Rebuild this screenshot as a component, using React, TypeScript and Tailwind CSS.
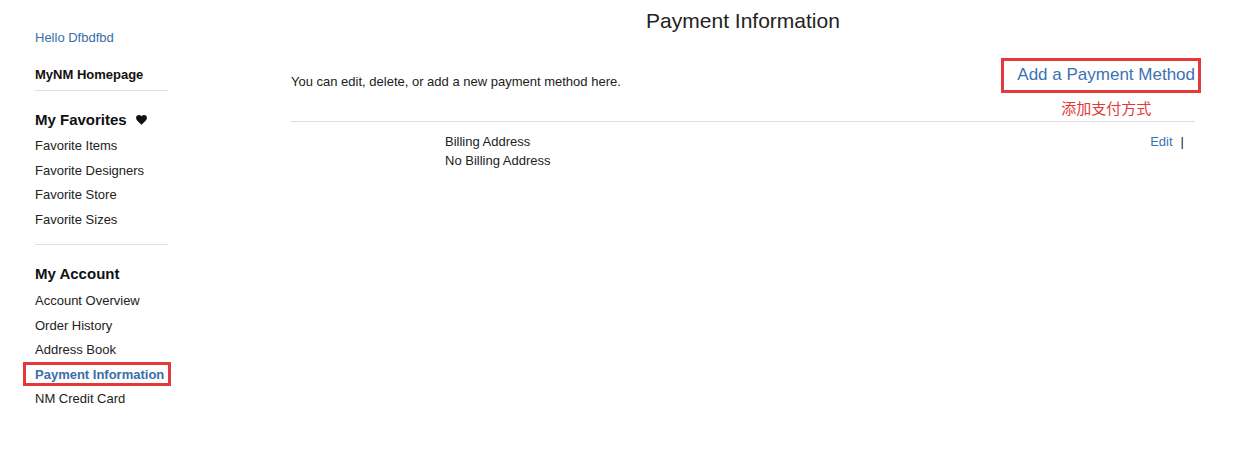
const FAVORITES = ['Favorite Items', 'Favorite Designers', 'Favorite Store', 'Favorite Sizes']
const ACCOUNT = ['Account Overview', 'Order History', 'Address Book', 'Payment Information', 'NM Credit Card']

function Heart() {
  return (
    <svg width="11" height="10" viewBox="0 0 24 22" aria-hidden="true" className="ml-[9px] inline-block">
      <path d="M12 21.5 10.3 20C4.2 14.5 0 10.7 0 6.2 0 2.6 2.8 0 6.4 0c2 0 4 .9 5.6 2.5C13.6.9 15.6 0 17.6 0 21.2 0 24 2.6 24 6.2c0 4.5-4.2 8.3-10.3 13.8L12 21.5z" fill="#111" />
    </svg>
  )
}

function Sidebar() {
  return (
    <aside className="w-[133px] shrink-0 pt-[30px] text-[13px] text-[#222]">
      <p className="leading-[16px] text-[#3a6ea8]">Hello Dfbdfbd</p>
      <p className="mt-[21px] border-b border-[#dedede] pb-[7px] font-bold leading-[16px] text-[#111]">MyNM Homepage</p>

      <h3 className="mt-[20px] flex items-center text-[15px] font-bold leading-[18px] text-[#111]">
        My Favorites
        <Heart />
      </h3>
      <ul className="mt-[5px] border-b border-[#dedede] pb-[12px]">
        {FAVORITES.map((item) => (
          <li key={item} className="leading-[24.5px]">{item}</li>
        ))}
      </ul>

      <h3 className="mt-[20px] text-[15px] font-bold leading-[18px] text-[#111]">My Account</h3>
      <ul className="mt-[6px]">
        {ACCOUNT.map((item) =>
          item === 'Payment Information' ? (
            <li key={item} className="relative font-bold leading-[24.5px] text-[#3a6ea8]">
              {item}
              <span className="pointer-events-none absolute -left-[12px] -right-[3px] -top-[1px] bottom-[1px] border-[3px] border-[#e33b3b]" />
            </li>
          ) : (
            <li key={item} className="leading-[24.5px]">{item}</li>
          ),
        )}
      </ul>
    </aside>
  )
}

export default function App() {
  return (
    <div className="flex h-[466px] w-[1258px] bg-white pl-[35px] font-['Liberation_Sans','Noto_Sans_CJK_SC',sans-serif] text-[#222]">
      <Sidebar />

      <main className="ml-[123px] w-[904px] pt-[9px]">
        <h1 className="text-center text-[21px] leading-[24px] text-[#222]">Payment Information</h1>

        <div className="mt-[32px] flex items-start justify-between">
          <p className="mt-[9px] text-[13px] leading-[16px]">You can edit, delete, or add a new payment method here.</p>
          <div className="flex flex-col items-center">
            <a href="#" className="relative text-[17px] leading-[20px] text-[#3a72b4]">
              Add a Payment Method
              <span className="pointer-events-none absolute -left-[16px] -right-[6px] -top-[7px] -bottom-[8px] border-[3px] border-[#e33b3b]" />
            </a>
            <span className="mt-[14px] text-[15px] leading-[20px] text-[#e03a3a]">添加支付方式</span>
          </div>
        </div>

        <div className="mt-[2px] border-t border-[#dddddd]" />

        <div className="mt-[10px] flex text-[13px] leading-[19px]">
          <div className="w-[154px] shrink-0" />
          <div className="flex-1">
            <p>Billing Address</p>
            <p>No Billing Address</p>
          </div>
          <div className="flex pr-[11px]">
            <a href="#" className="text-[#3a72b4]">Edit</a>
            <span className="ml-[8px]">|</span>
          </div>
        </div>
      </main>
    </div>
  )
}
